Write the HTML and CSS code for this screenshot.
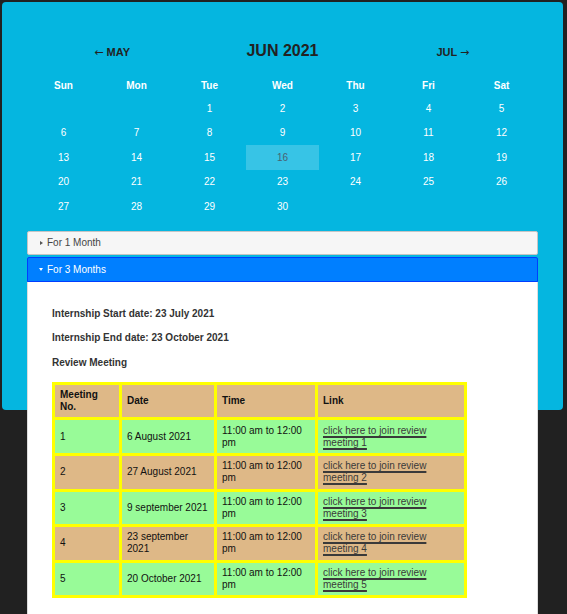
FILE: index.html
```
<!DOCTYPE html>
<html>
<head>
<meta charset="utf-8">
<link rel="stylesheet" href="styles.css">
</head>
<body>
<div class="page">
  <div class="card">
    <div class="cal-head">
      <span class="nav"><span class="arrow">&larr;</span> MAY</span>
      <span class="month">JUN 2021</span>
      <span class="nav">JUL <span class="arrow">&rarr;</span></span>
    </div>
    <table class="cal">
      <thead>
        <tr><th>Sun</th><th>Mon</th><th>Tue</th><th>Wed</th><th>Thu</th><th>Fri</th><th>Sat</th></tr>
      </thead>
      <tbody>
        <tr><td></td><td></td><td>1</td><td>2</td><td>3</td><td>4</td><td>5</td></tr>
        <tr><td>6</td><td>7</td><td>8</td><td>9</td><td>10</td><td>11</td><td>12</td></tr>
        <tr><td>13</td><td>14</td><td>15</td><td class="today">16</td><td>17</td><td>18</td><td>19</td></tr>
        <tr><td>20</td><td>21</td><td>22</td><td>23</td><td>24</td><td>25</td><td>26</td></tr>
        <tr><td>27</td><td>28</td><td>29</td><td>30</td><td></td><td></td><td></td></tr>
      </tbody>
    </table>
    <div class="accordion">
      <div class="acc-h"><span class="tri-right"></span>For 1 Month</div>
      <div class="acc-h active"><span class="tri-down"></span>For 3 Months</div>
      <div class="acc-c">
        <p>Internship Start date: 23 July 2021</p>
        <p>Internship End date: 23 October 2021</p>
        <p>Review Meeting</p>
        <table class="meet">
          <colgroup><col class="c1"><col class="c2"><col class="c3"><col class="c4"></colgroup>
          <tr class="tan"><th>Meeting No.</th><th>Date</th><th>Time</th><th>Link</th></tr>
          <tr class="green"><td>1</td><td>6 August 2021</td><td>11:00 am to 12:00 pm</td><td><a href="#">click here to join review meeting 1</a></td></tr>
          <tr class="tan"><td>2</td><td>27 August 2021</td><td>11:00 am to 12:00 pm</td><td><a href="#">click here to join review meeting 2</a></td></tr>
          <tr class="green"><td>3</td><td>9 september 2021</td><td>11:00 am to 12:00 pm</td><td><a href="#">click here to join review meeting 3</a></td></tr>
          <tr class="tan"><td>4</td><td>23 september 2021</td><td>11:00 am to 12:00 pm</td><td><a href="#">click here to join review meeting 4</a></td></tr>
          <tr class="green"><td>5</td><td>20 October 2021</td><td>11:00 am to 12:00 pm</td><td><a href="#">click here to join review meeting 5</a></td></tr>
        </table>
      </div>
    </div>
  </div>
</div>
</body>
</html>
```
FILE: styles.css
```
html {
  background: #212121;
}
body {
  margin: 0;
  font-family: "Liberation Sans", Arial, sans-serif;
}
.page {
  padding: 2px 4px 0 2px;
}
.card {
  position: relative;
  z-index: 0;
  padding: 0 25px;
  box-sizing: border-box;
}
.card::before {
  content: "";
  position: absolute;
  left: 0;
  right: 0;
  top: 0;
  height: 408px;
  background: #05b6e0;
  border-radius: 4px;
  z-index: -1;
}
.cal-head {
  display: grid;
  grid-template-columns: 1fr 1fr 1fr;
  align-items: baseline;
  padding-top: 40px;
  text-align: center;
  color: #222;
  font-weight: bold;
}
.month {
  font-size: 16px;
  line-height: 18px;
}
.nav {
  font-size: 11px;
}
.arrow {
  font-family: "DejaVu Sans", sans-serif;
  font-weight: normal;
}
.cal {
  width: 100%;
  table-layout: fixed;
  border-collapse: collapse;
  margin-top: 14px;
  font-size: 10px;
  color: #fff;
  text-align: center;
}
.cal th {
  height: 22px;
  padding: 0;
  font-weight: bold;
}
.cal td {
  height: 24.5px;
  padding: 0;
}
.cal td.today {
  background: rgba(255, 255, 255, 0.2);
  color: #4a6270;
}
.accordion {
  margin-top: 12px;
}
.acc-h {
  height: 24px;
  box-sizing: border-box;
  border: 1px solid #c5c5c5;
  border-radius: 2px;
  background: #f6f6f6;
  color: #454545;
  font-size: 10px;
  display: flex;
  align-items: center;
  padding-left: 12px;
}
.acc-h.active {
  height: 25px;
  margin-top: 2px;
  background: #007fff;
  border-color: #003eff;
  color: #fff;
  border-radius: 2px 2px 0 0;
  padding-left: 11px;
}
.tri-right {
  width: 0;
  height: 0;
  border-left: 3px solid #555;
  border-top: 2.5px solid transparent;
  border-bottom: 2.5px solid transparent;
  margin-right: 4px;
}
.tri-down {
  width: 0;
  height: 0;
  border-top: 3px solid #fff;
  border-left: 2.5px solid transparent;
  border-right: 2.5px solid transparent;
  margin-right: 4px;
}
.acc-c {
  background: #fff;
  border: 1px solid #ddd;
  border-top: 0;
  padding: 26px 24px 30px;
  color: #333;
  font-size: 10px;
}
.acc-c p {
  margin: 0 0 12.75px;
  line-height: 12px;
  font-weight: bold;
}
.meet {
  width: 415px;
  table-layout: fixed;
  border-collapse: separate;
  border-spacing: 3px;
  background: #ffff00;
  font-size: 10px;
  color: #111;
}
.meet .c1 { width: 64px; }
.meet .c2 { width: 92px; }
.meet .c3 { width: 98px; }
.meet .c4 { width: 146px; }
.meet th, .meet td {
  padding: 4.3px 5px;
  line-height: 12px;
  text-align: left;
  vertical-align: middle;
}
.meet th {
  font-weight: bold;
}
.tan th, .tan td {
  background: #deb887;
}
.green td {
  background: #98fb98;
}
.meet a {
  color: #3a3a3a;
  text-decoration: underline;
  text-decoration-thickness: 2px;
  text-underline-offset: 1.5px;
}
```
